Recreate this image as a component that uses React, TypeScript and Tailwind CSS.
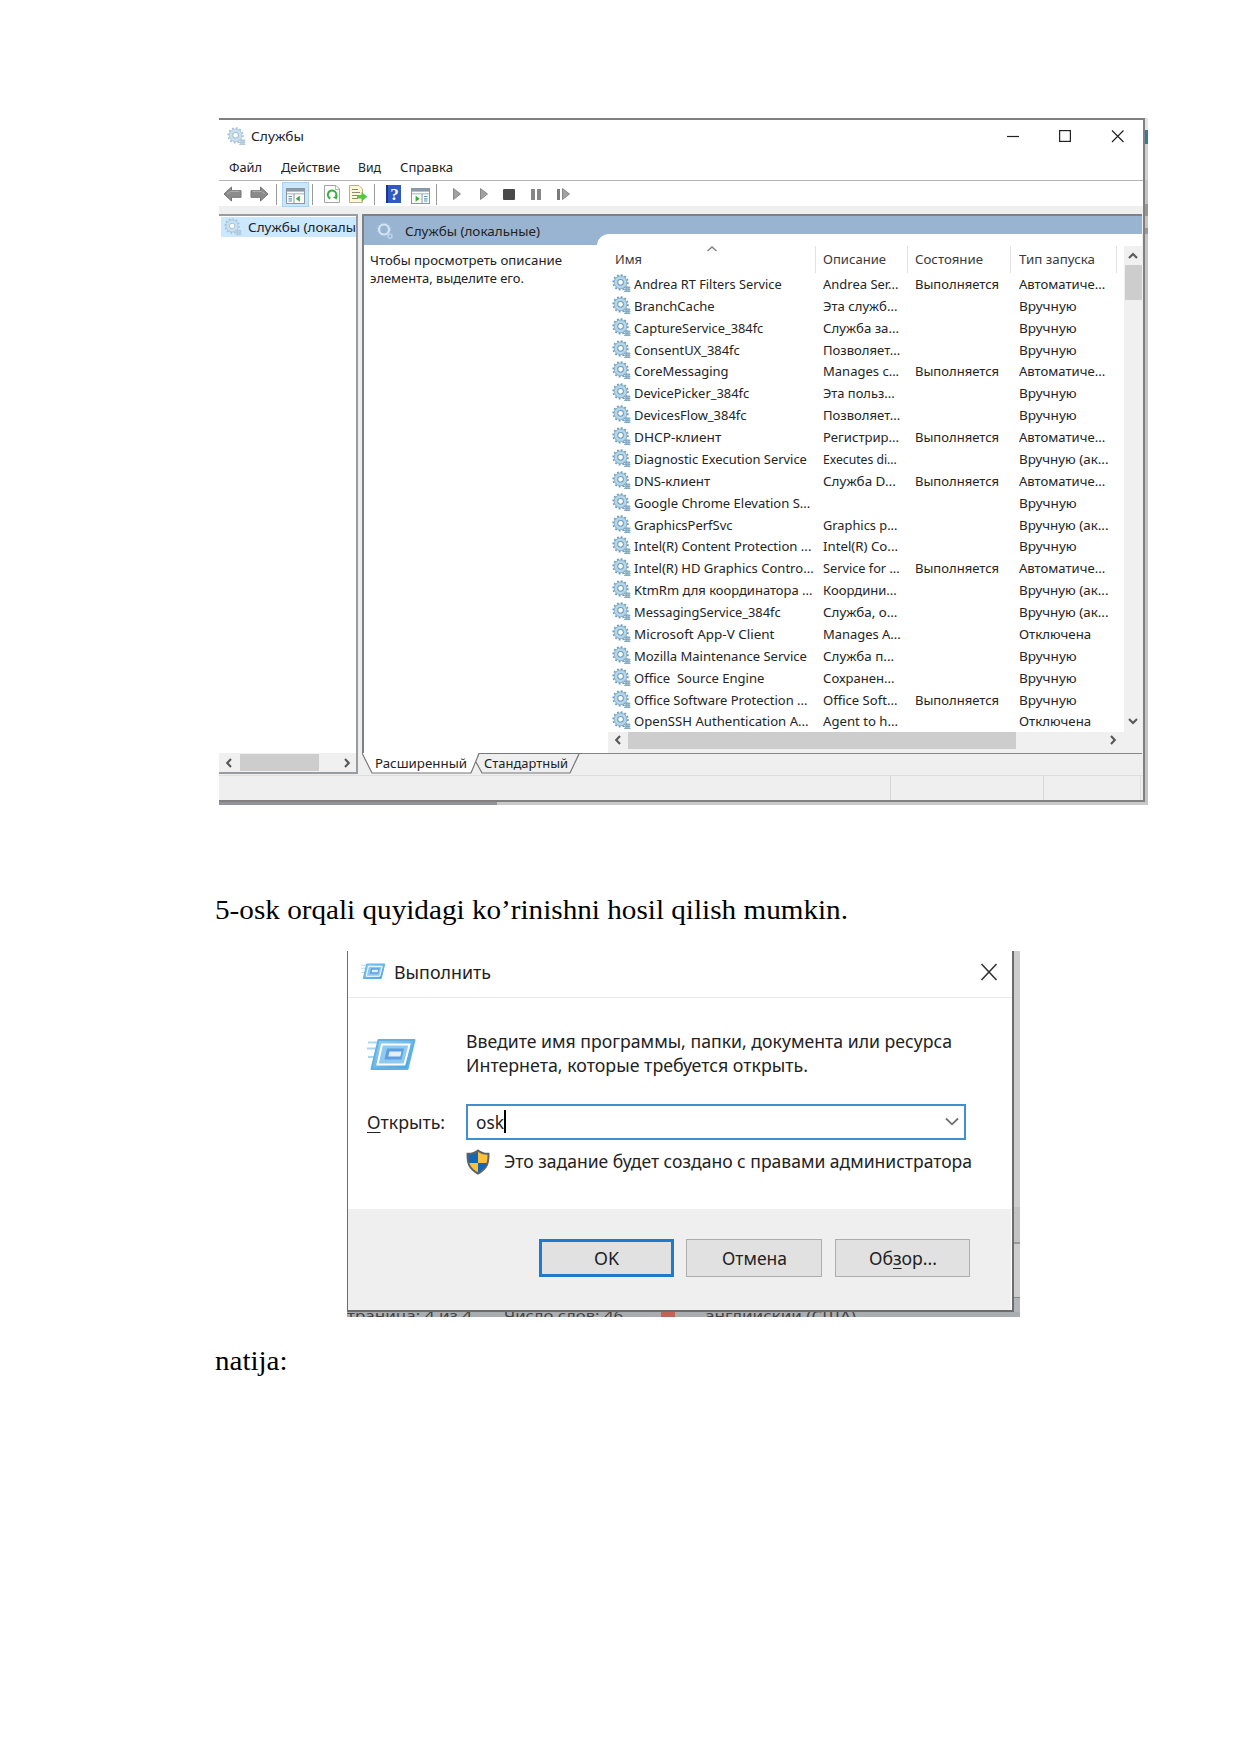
import { useLayoutEffect, useRef, type ReactNode } from "react";

const UNIT = 1.1192;

/** Single line of text condensed or widened to an exact width. */
function Fit({ w, children, className = "" }: { w: number; children: ReactNode; className?: string }) {
  const ref = useRef<HTMLSpanElement>(null);
  useLayoutEffect(() => {
    const el = ref.current;
    if (!el) return;
    el.style.transform = "none";
    const natural = el.getBoundingClientRect().width;
    el.style.transform = `scaleX(${w / natural})`;
  }, [w]);
  return (
    <span className="block shrink-0 whitespace-pre" style={{ width: w }}>
      <span ref={ref} className={`inline-block origin-left whitespace-pre ${className}`}>
        {children}
      </span>
    </span>
  );
}

function Gear({ className = "", soft = false }: { className?: string; soft?: boolean }) {
  const main = soft ? "#a3bfd2" : "#6f9ab5";
  return (
    <svg viewBox="0 0 20 20" className={`shrink-0 ${className}`} fill="none">
      <circle cx="9" cy="8.8" r="7.7" stroke={main} strokeWidth="1.8" strokeDasharray="1.9 2.13" />
      <circle cx="9" cy="8.8" r="5" stroke={soft ? "#c9e0ef" : "#b4d7ec"} strokeWidth="4" />
      <circle cx="9" cy="8.8" r="6.7" stroke={main} strokeWidth="0.7" />
      <circle cx="9" cy="8.8" r="3" fill="#fff" stroke={main} strokeWidth="1.1" />
      <rect x="13.4" y="13" width="5.4" height="6" fill={soft ? "#bdd3e1" : "#9dbfd3"} />
      <path d="M12.8 14.3 H19.6 M12.8 16.3 H19.6 M12.8 18.4 H19.6" stroke={main} strokeWidth="0.9" strokeDasharray="1.2 0.6" />
    </svg>
  );
}

function HeaderGear() {
  return (
    <svg viewBox="0 0 18 18" className="h-[18px] w-[18px] shrink-0" fill="none">
      <circle cx="8" cy="7.5" r="5" stroke="#d5e6f3" strokeWidth="2.2" />
      <circle cx="8" cy="7.5" r="6.6" stroke="#b3cde3" strokeWidth="1" strokeDasharray="1.5 1.5" />
      <circle cx="14" cy="14.3" r="2" stroke="#bcd4e8" strokeWidth="1.5" />
    </svg>
  );
}

function Chevron({ d, className = "" }: { d: string; className?: string }) {
  return (
    <svg viewBox="0 0 12 12" className={`h-3 w-3 shrink-0 ${className}`} fill="none">
      <path d={d} stroke="#585858" strokeWidth="2.1" />
    </svg>
  );
}
const LEFT = "M8 2 L4.2 6 L8 10";
const RIGHT = "M4 2 L7.8 6 L4 10";
const UP = "M2 8 L6 4 L10 8";
const DOWN = "M2 4 L6 8 L10 4";

function Sep({ className = "" }: { className?: string }) {
  return <div className={`h-[21px] w-px shrink-0 bg-[#9a9a9a] ${className}`} />;
}

function Arrow({ flip = false, className = "" }: { flip?: boolean; className?: string }) {
  return (
    <svg viewBox="0 0 19 16" className={`h-4 w-[19px] shrink-0 ${flip ? "-scale-x-100" : ""} ${className}`}>
      <path d="M1 8 L8.5 1 V4.7 H18 V11.3 H8.5 V15 Z" fill="#8b8b8b" stroke="#747474" strokeWidth="1" />
      <path d="M4 8 L7.5 5.5 H16.5" stroke="#adadad" fill="none" />
    </svg>
  );
}

function PanelIcon({ mirrored = false }: { mirrored?: boolean }) {
  return (
    <svg viewBox="0 0 19 16" className="h-4 w-[19px] shrink-0">
      <rect x="0.5" y="0.5" width="18" height="15" fill="#fbfbfb" stroke="#8997a3" />
      <rect x="1" y="1" width="17" height="2.6" fill="#8b9aa8" />
      <path d="M1 5.8 H18" stroke="#a9b3bb" />
      {mirrored ? (
        <>
          <path d="M11 6 V15" stroke="#8997a3" />
          <path d="M13 8.5 H16.5 M13 10.8 H16.5 M13 13 H16.5" stroke="#5f93c5" strokeWidth="1.2" />
          <path d="M4.6 7.8 V13.8 L8.6 10.8 Z" fill="#35ad35" />
        </>
      ) : (
        <>
          <path d="M8 6 V15" stroke="#8997a3" />
          <path d="M2.5 8.5 H6 M2.5 10.8 H6 M2.5 13 H6" stroke="#5f93c5" strokeWidth="1.2" />
          <path d="M13.8 7.8 V13.8 L9.8 10.8 Z" fill="#35ad35" />
        </>
      )}
    </svg>
  );
}

function Play({ className = "" }: { className?: string }) {
  return (
    <svg viewBox="0 0 8 12" className={`h-3 w-2 shrink-0 ${className}`}>
      <path d="M0.5 0.5 L7.5 6 L0.5 11.5 Z" fill="#a2a2a2" stroke="#878787" />
    </svg>
  );
}

function Toolbar() {
  return (
    <div className="flex h-[25px] items-center bg-white pt-px">
      <Arrow className="ml-1" />
      <Arrow flip className="ml-2" />
      <Sep className="ml-[7px]" />
      <div className="ml-[5px] flex h-[25px] w-[27px] items-center justify-center border border-[#a8d3f3] bg-[#cbe6fa] pt-1">
        <PanelIcon />
      </div>
      <Sep className="ml-[3px]" />
      <svg viewBox="0 0 16 18" className="ml-[11px] h-[18px] w-4 shrink-0" fill="none">
        <path d="M0.5 0.5 H12 L15.5 4 V17.5 H0.5 Z" fill="#fcfcfc" stroke="#a5a5a5" />
        <path d="M11.5 1 V4.5 H15" stroke="#b8b8b8" />
        <path d="M6.3 13.5 A4.2 4.2 0 1 1 11.9 11.5" stroke="#35b23c" strokeWidth="2.1" />
        <path d="M13.8 10.5 L12.6 14.4 L8.8 12.2 Z" fill="#35b23c" />
      </svg>
      <svg viewBox="0 0 19 18" className="ml-[9px] h-[18px] w-[19px] shrink-0" fill="none">
        <path d="M0.5 0.5 H10 L13.5 4 V17.5 H0.5 Z" fill="#fff7d3" stroke="#b6b093" />
        <path d="M3 4.5 H9 M3 7.5 H11 M3 10.5 H9 M3 13.5 H9" stroke="#8a8a78" strokeWidth="1.2" />
        <path d="M8 10 H12.5 V7 L18.3 11.7 L12.5 16.5 V13.5 H8 Z" fill="#51ca43" />
      </svg>
      <Sep className="ml-[6px]" />
      <div className="ml-[11px] flex h-[18px] w-[15px] shrink-0 items-center justify-center border-l-2 border-[#1a3595] bg-[#3159c4] font-['Liberation_Serif',serif] text-[17px] leading-none font-bold text-white">
        ?
      </div>
      <div className="ml-[10px] pt-1">
        <PanelIcon mirrored />
      </div>
      <Sep className="ml-[6px]" />
      <Play className="ml-4" />
      <Play className="ml-[19px]" />
      <div className="ml-[15px] h-[11px] w-3 rounded-[1px] bg-[#494949]" />
      <div className="ml-4 h-[11px] w-1 bg-[#858585]" />
      <div className="ml-[2px] h-[11px] w-1 bg-[#858585]" />
      <div className="ml-4 h-[11px] w-[3px] bg-[#7a7a7a]" />
      <Play className="ml-[2px]" />
    </div>
  );
}

type Start = "auto" | "manual" | "trigger" | "off";
const START: Record<Start, [string, number]> = {
  auto: ["Автоматиче...", 77],
  manual: ["Вручную", 51.5],
  trigger: ["Вручную (ак...", 80],
  off: ["Отключена", 64.5],
};

const SERVICES: [string, number, string, number, boolean, Start][] = [
  ["Andrea RT Filters Service", 132, "Andrea Ser...", 67.5, true, "auto"],
  ["BranchCache", 72, "Эта служб...", 66.5, false, "manual"],
  ["CaptureService_384fc", 115.5, "Служба за...", 68, false, "manual"],
  ["ConsentUX_384fc", 94.5, "Позволяет...", 69, false, "manual"],
  ["CoreMessaging", 84.5, "Manages c...", 68, true, "auto"],
  ["DevicePicker_384fc", 103, "Эта польз...", 64, false, "manual"],
  ["DevicesFlow_384fc", 100.5, "Позволяет...", 69, false, "manual"],
  ["DHCP-клиент", 78, "Регистрир...", 68, true, "auto"],
  ["Diagnostic Execution Service", 154.5, "Executes di...", 66, false, "trigger"],
  ["DNS-клиент", 68, "Служба D...", 65, true, "auto"],
  ["Google Chrome Elevation S...", 157.5, "", 0, false, "manual"],
  ["GraphicsPerfSvc", 88, "Graphics p...", 66.5, false, "trigger"],
  ["Intel(R) Content Protection ...", 158.5, "Intel(R) Co...", 67, false, "manual"],
  ["Intel(R) HD Graphics Contro...", 160.5, "Service for ...", 68.5, true, "auto"],
  ["KtmRm для координатора ...", 159.5, "Координи...", 66, false, "trigger"],
  ["MessagingService_384fc", 131, "Служба, о...", 66.5, false, "trigger"],
  ["Microsoft App-V Client", 125.5, "Manages A...", 69.5, false, "off"],
  ["Mozilla Maintenance Service", 154.5, "Служба п...", 63.5, false, "manual"],
  ["Office  Source Engine", 116.5, "Сохранен...", 64, false, "manual"],
  ["Office Software Protection ...", 155, "Office Soft...", 66.5, true, "manual"],
  ["OpenSSH Authentication A...", 156, "Agent to h...", 67, false, "off"],
];

function ServiceList() {
  return (
    <div className="w-[527px] shrink-0">
      <div className="flex h-[27px] text-[#3a3a3a]">
        <div className="relative flex w-[219px] items-center border-r border-[#e2e2e2] pb-px pl-[18px]">
          <Fit w={27}>Имя</Fit>
          <svg viewBox="0 0 12 6" className="absolute top-0 left-[109px] h-1.5 w-3" fill="none">
            <path d="M1.5 5 L6 1 L10.5 5" stroke="#808080" strokeWidth="1.4" />
          </svg>
        </div>
        <div className="flex w-[92px] items-center border-r border-[#e2e2e2] pb-px pl-[7px]">
          <Fit w={63}>Описание</Fit>
        </div>
        <div className="flex w-[103px] items-center border-r border-[#e2e2e2] pb-px pl-[7px]">
          <Fit w={68}>Состояние</Fit>
        </div>
        <div className="flex w-[106px] items-center border-r border-[#e2e2e2] pb-px pl-2">
          <Fit w={76}>Тип запуска</Fit>
        </div>
      </div>
      <div className="h-[459px] overflow-hidden text-[#242424]">
        {SERVICES.map(([name, nameW, desc, descW, running, start]) => (
          <div key={name} className="flex h-[21.88px] items-center">
            <Gear className="mb-px ml-[15px] h-[19px] w-[19px]" />
            <div className="ml-[3px] w-[189px] shrink-0">
              <Fit w={nameW * UNIT}>{name}</Fit>
            </div>
            <div className="w-[92px] shrink-0">{desc && <Fit w={descW * UNIT}>{desc}</Fit>}</div>
            <div className="w-[104px] shrink-0">{running && <Fit w={84}>Выполняется</Fit>}</div>
            <Fit w={START[start][1] * UNIT}>{START[start][0]}</Fit>
          </div>
        ))}
      </div>
    </div>
  );
}

function ServicesWindow() {
  return (
    <div className="h-[687px] w-[929px] font-['Noto_Sans','Open_Sans',sans-serif] text-[13.4px] leading-[18px] text-[#222]">
      <div className="flex h-[684px]">
        <div className="flex w-[926px] flex-col border-t-2 border-r-2 border-b-2 border-[#808080] bg-[#efefef]">
          <div className="flex h-[34px] shrink-0 items-center bg-white pb-0.5">
            <Gear soft className="ml-2 h-[19px] w-[19px]" />
            <div className="ml-[5px]">
              <Fit w={53}>Службы</Fit>
            </div>
            <svg viewBox="0 0 120 14" className="mr-[17px] ml-auto h-[14px] w-[120px]" fill="none" stroke="#222" strokeWidth="1.2">
              <path d="M1 7.5 H13" />
              <rect x="53.6" y="1.6" width="10.8" height="10.8" />
              <path d="M106 1.5 L117.5 13 M117.5 1.5 L106 13" />
            </svg>
          </div>
          <div className="flex h-[26px] shrink-0 items-center bg-white pb-px pl-[10px]">
            <Fit w={33}>Файл</Fit>
            <div className="ml-[19px]">
              <Fit w={59}>Действие</Fit>
            </div>
            <div className="ml-[18px]">
              <Fit w={23}>Вид</Fit>
            </div>
            <div className="ml-[19px]">
              <Fit w={53}>Справка</Fit>
            </div>
          </div>
          <div className="h-px shrink-0 bg-[#b5b5b5]" />
          <Toolbar />
          <div className="mt-2 flex h-[561px] shrink-0">
            <div className="flex h-[560px] w-[139px] flex-col border-t-2 border-r-2 border-b-2 border-[#999c9f] bg-white">
              <div className="mt-px ml-[2px] flex h-5 items-center overflow-hidden bg-[#cce8ff]">
                <Gear soft className="ml-[3px] h-[18px] w-[18px]" />
                <div className="ml-[6px]">
                  <Fit w={108}>Службы (локалы</Fit>
                </div>
              </div>
              <div className="mt-auto flex h-[19px] items-center bg-[#f0f0f0]">
                <Chevron d={LEFT} className="ml-1" />
                <div className="ml-[5px] h-[17px] w-[79px] bg-[#cdcdcd]" />
                <Chevron d={RIGHT} className="ml-[22px]" />
              </div>
            </div>
            <div className="ml-[4px] w-[780px]">
              <div className="flex h-[539px] border-t-2 border-l-2 border-[#7d8186] bg-white">
                <div className="w-[233px] shrink-0">
                  <div className="flex h-[29px] items-center bg-[#99b4d1]">
                    <div className="ml-3">
                      <HeaderGear />
                    </div>
                    <div className="ml-[11px]">
                      <Fit w={135}>Службы (локальные)</Fit>
                    </div>
                  </div>
                  <div className="mt-[7px] ml-[6px] leading-[17.5px]">
                    <Fit w={192}>Чтобы просмотреть описание</Fit>
                    <Fit w={154}>элемента, выделите его.</Fit>
                  </div>
                </div>
                <div className="flex grow flex-col bg-[#99b4d1] pt-[18px]">
                  <div className="flex grow flex-col rounded-tl-[12px] bg-white pt-3">
                    <div className="flex">
                      <ServiceList />
                      <div className="flex h-[486px] w-[18px] flex-col items-center bg-[#f0f0f0]">
                        <Chevron d={UP} className="mt-1" />
                        <div className="mt-[3px] h-[35px] w-[17px] bg-[#cdcdcd]" />
                        <Chevron d={DOWN} className="mt-auto mb-[5px]" />
                      </div>
                    </div>
                    <div className="ml-[11px] flex h-[21px] items-start bg-[#f0f0f0]">
                      <Chevron d={LEFT} className="mt-[2px] ml-1" />
                      <div className="ml-1 h-[17px] w-[388px] bg-[#cdcdcd]" />
                      <Chevron d={RIGHT} className="mt-[2px] ml-[91px]" />
                    </div>
                  </div>
                </div>
              </div>
              <div className="flex h-[22px] items-start">
                <div className="relative h-[21px] w-[220px] shrink-0">
                  <svg viewBox="0 0 220 21" className="absolute inset-0 h-[21px] w-[220px]" fill="none">
                    <path d="M0 0 L10 20 H110 L117 0 Z" fill="#fff" />
                    <path d="M0 0 L10 20 H109 L117 0.5 H220 M114 9 L120 20 H208 L217 1" stroke="#777" strokeWidth="1.2" />
                  </svg>
                  <div className="relative flex h-[20px] items-center pl-[13px]">
                    <Fit w={92}>Расширенный</Fit>
                    <div className="ml-[17px]">
                      <Fit w={84}>Стандартный</Fit>
                    </div>
                  </div>
                </div>
                <div className="h-px grow bg-[#868686]" />
              </div>
            </div>
          </div>
          <div className="flex grow border-t border-[#dedede]">
            <div className="w-[672px] border-r border-[#d6d6d6]" />
            <div className="w-[153px] border-r border-[#d6d6d6]" />
            <div className="w-[97px] border-r border-[#dedede]" />
          </div>
        </div>
        <div className="flex w-[3px] flex-col bg-[#c4c4c4]">
          <div className="h-3 bg-[#e5e5e5]" />
          <div className="h-[14px] bg-[#357a9f]" />
          <div className="h-[36px] bg-[#d0d0d0]" />
          <div className="mt-6 h-3 bg-[#989898]" />
          <div className="mt-3 h-1.5 bg-[#999]" />
        </div>
      </div>
      <div className="flex h-[3px]">
        <div className="w-[278px] bg-[#919498]" />
        <div className="grow bg-[#c9c9c9]" />
      </div>
    </div>
  );
}

function RunIcon({ className = "" }: { className?: string }) {
  return (
    <svg viewBox="0 0 50 34" className={`shrink-0 ${className}`} fill="none">
      <defs>
        <linearGradient id="runFrame" x1="0" y1="0" x2="1" y2="1">
          <stop offset="0" stopColor="#9ad2f2" />
          <stop offset="1" stopColor="#459fdc" />
        </linearGradient>
      </defs>
      <path d="M1 4.5 H12 M0 10.5 H10 M1 19 H8" stroke="#a9d6f2" strokeWidth="1.8" />
      <path d="M11.5 2 H47.5 L40.5 31 H4.5 Z" fill="url(#runFrame)" stroke="#62b0e2" strokeWidth="2" strokeLinejoin="round" />
      <path d="M15 6.5 H42.5 L37.5 26.5 H10.5 Z" fill="#8fc9f0" stroke="#fff" strokeWidth="2" />
      <path d="M20 10.5 H37 L34.5 21.5 H17.5 Z" fill="#5d9fe0" />
      <path d="M22.5 13.5 H34.5 L33.3 18.5 H21.3 Z" fill="#e3f0fb" />
    </svg>
  );
}

function Shield() {
  return (
    <svg viewBox="0 0 24 26" className="h-[26px] w-6 shrink-0">
      <defs>
        <clipPath id="shield">
          <path d="M12 1.5 C9 4 5 5 1.5 4.8 C1.3 14 3 20 12 24.5 C21 20 22.7 14 22.5 4.8 C19 5 15 4 12 1.5 Z" />
        </clipPath>
      </defs>
      <g clipPath="url(#shield)">
        <rect width="12" height="14" fill="#1367b8" />
        <rect x="12" width="12" height="14" fill="#fcc23c" />
        <rect y="14" width="12" height="12" fill="#fcc23c" />
        <rect x="12" y="14" width="12" height="12" fill="#1367b8" />
      </g>
      <path
        d="M12 1.5 C9 4 5 5 1.5 4.8 C1.3 14 3 20 12 24.5 C21 20 22.7 14 22.5 4.8 C19 5 15 4 12 1.5 Z"
        fill="none"
        stroke="#5d6468"
        strokeWidth="2"
      />
    </svg>
  );
}

function RunDialog() {
  return (
    <div className="h-[366px] w-[673px] font-['Noto_Sans','Open_Sans',sans-serif] text-[18.2px] leading-6 text-[#222]">
      <div className="flex h-[361px]">
        <div className="flex w-[667px] flex-col border-r-2 border-b-2 border-l border-[#6c6c6c] bg-white">
          <div className="flex h-[47px] shrink-0 items-start border-b border-[#ececec]">
            <RunIcon className="mt-3 ml-[13px] h-[17px] w-[25px]" />
            <div className="mt-[9px] ml-2">
              <Fit w={97}>Выполнить</Fit>
            </div>
            <svg viewBox="0 0 18 18" className="mt-3 mr-[14px] ml-auto h-[18px] w-[18px]" fill="none">
              <path d="M1.5 1 L16.5 17 M16.5 1 L1.5 17" stroke="#333" strokeWidth="1.6" />
            </svg>
          </div>
          <div className="mt-[31px] flex h-12 shrink-0">
            <RunIcon className="mt-[9px] ml-[19px] h-[34px] w-[50px]" />
            <div className="ml-[49px]">
              <Fit w={486}>Введите имя программы, папки, документа или ресурса</Fit>
              <Fit w={342}>Интернета, которые требуется открыть.</Fit>
            </div>
          </div>
          <div className="mt-[27px] flex h-[36px] shrink-0 items-center">
            <div className="ml-[19px] w-[99px]">
              <Fit w={78}>
                <span className="underline decoration-1 underline-offset-3">О</span>ткрыть:
              </Fit>
            </div>
            <div className="flex h-[36px] w-[500px] items-center border-2 border-[#4190cb] pb-px pl-[8px]">
              <Fit w={28}>osk</Fit>
              <div className="h-[23px] w-[1.5px] bg-black" />
              <svg viewBox="0 0 14 9" className="mr-[5px] ml-auto h-[9px] w-[14px]" fill="none">
                <path d="M1 1.5 L7 7.3 L13 1.5" stroke="#707070" strokeWidth="1.8" />
              </svg>
            </div>
          </div>
          <div className="mt-2 ml-[118px] flex h-7 shrink-0 items-center">
            <Shield />
            <div className="mb-0.5 ml-[14px]">
              <Fit w={468}>Это задание будет создано с правами администратора</Fit>
            </div>
          </div>
          <div className="mt-auto mr-px flex h-[101px] shrink-0 gap-3 bg-[#efefef] pt-[30px] pl-[191px]">
            <div className="flex h-[38px] w-[135px] items-center justify-center border-[3px] border-[#1f7acb] bg-[#e1e1e1] pb-px">
              <Fit w={25}>OK</Fit>
            </div>
            <div className="flex h-[38px] w-[136px] items-center justify-center border border-[#adadad] bg-[#e1e1e1] pb-px">
              <Fit w={65}>Отмена</Fit>
            </div>
            <div className="ml-px flex h-[38px] w-[135px] items-center justify-center border border-[#adadad] bg-[#e1e1e1] pb-px">
              <Fit w={68}>
                Об<span className="underline decoration-1 underline-offset-3">з</span>ор...
              </Fit>
            </div>
          </div>
        </div>
        <div className="flex w-[6px] flex-col bg-[#cdcdcd]">
          <div className="mt-[256px] h-[37px] border-b-2 border-[#999] bg-[#c2c2c2]" />
          <div className="mt-auto h-[15px] border-t border-[#888] bg-[#b3b6ba]" />
        </div>
      </div>
      <div className="flex h-[5px] items-center overflow-hidden bg-[#aaadb0] text-[15px] leading-5 text-[#444]">
        <div className="flex h-5 shrink-0">
          <div className="w-[157px]">
            <Fit w={125}>траница: 4 из 4</Fit>
          </div>
          <div className="w-[156px]">
            <Fit w={119}>Число слов: 46</Fit>
          </div>
          <div className="mt-1 mr-[30px] ml-[1px] h-3 w-[14px] bg-[#bd6557]" />
          <Fit w={151}>английский (США)</Fit>
        </div>
      </div>
    </div>
  );
}

export default function App() {
  return (
    <main className="h-[1755px] w-[1241px] overflow-hidden bg-white pt-[118px]">
      <div className="ml-[219px]">
        <ServicesWindow />
      </div>
      <div className="mt-[89px] ml-[215px] font-['Liberation_Serif',serif] text-[28px] leading-8 text-black">
        <Fit w={633}>5-osk orqali quyidagi ko’rinishni hosil qilish mumkin.</Fit>
      </div>
      <div className="mt-[25px] ml-[347px]">
        <RunDialog />
      </div>
      <div className="mt-7 ml-[215px] font-['Liberation_Serif',serif] text-[28px] leading-8 text-black">
        <Fit w={72.5}>natija:</Fit>
      </div>
    </main>
  );
}
